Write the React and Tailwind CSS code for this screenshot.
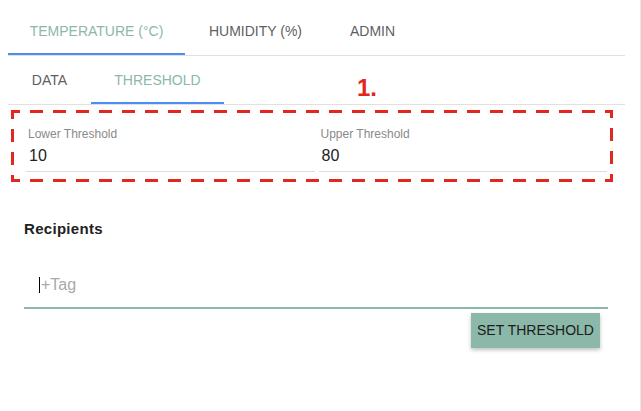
import React from "react";

const TEAL = "text-[#8bb8a8]";

function Tab({ label, active, width }) {
  return (
    <div
      className={`relative flex h-[48px] items-center justify-center text-[14px] font-medium uppercase ${width} ${
        active ? TEAL : "text-[#5f5f5f]"
      }`}
    >
      {label}
      {active && <div className="absolute bottom-0 left-0 right-0 h-[2px] bg-[#4a8ff0]" />}
    </div>
  );
}

function Field({ label, value }) {
  return (
    <div className="flex-1">
      <div className="pl-[2px] text-[12px] leading-4 text-[#8a8a8a]">{label}</div>
      <div className="mt-[2px] border-b border-[#dddddd] pb-[3px] pl-[3px] text-[16px] leading-6 text-[#222]">
        {value}
      </div>
    </div>
  );
}

export default function App() {
  return (
    <div
      className="min-h-[411px] w-[641px] border-r border-[#e6e6e6] bg-white"
      style={{ fontFamily: '"Liberation Sans", Arial, sans-serif' }}
    >
      <div className="pl-2 pr-[15px] pt-[7px]">
        <div className="flex border-b border-[#e0e0e0]">
          <Tab label="Temperature (°C)" active width="w-[177px]" />
          <Tab label="Humidity (%)" width="w-[141px]" />
          <Tab label="Admin" width="w-[93px]" />
        </div>

        <div className="relative flex border-b border-[#e0e0e0]">
          <Tab label="Data" width="w-[83px]" />
          <Tab label="Threshold" active width="w-[133px]" />
          {/* annotation marker */}
          <span className="absolute left-[349px] top-[20px] text-[24px] font-bold leading-6 text-[#e2281e]">
            1.
          </span>
        </div>

        {/* annotated threshold fields */}
        <div className="relative ml-[3px] mt-[5px] h-[72px] w-[602px] pl-[15px] pr-[6px] pt-[16px]">
          <svg className="pointer-events-none absolute inset-0" width="602" height="72">
            <rect
              x="1.5"
              y="1.5"
              width="599"
              height="69"
              fill="none"
              stroke="#e2281e"
              strokeWidth="3"
              strokeDasharray="13 10"
              strokeDashoffset="5.5"
            />
          </svg>
          <div className="flex gap-[4px]">
            <Field label="Lower Threshold" value="10" />
            <Field label="Upper Threshold" value="80" />
          </div>
        </div>

        <div className="ml-4 mt-[37px] text-[15px] font-bold leading-5 tracking-[0.3px] text-[#222]">
          Recipients
        </div>

        <div className="ml-4 mr-[17px] mt-[34px] border-b-2 border-[#8bb8a8] pb-[10px] pl-[15px]">
          <div className="flex h-6 items-center text-[16px] text-[#aaaaaa]">
            <span className="mr-px h-[16px] w-px bg-black" />
            +Tag
          </div>
        </div>

        <div className="mt-[4px] flex justify-end pr-[25px]">
          <button className="h-[35px] w-[129px] bg-[#8bb8a8] text-[14px] font-medium uppercase text-[#1c1c1c] shadow-[0_2px_4px_rgba(0,0,0,0.25)]">
            Set Threshold
          </button>
        </div>
      </div>
    </div>
  );
}
